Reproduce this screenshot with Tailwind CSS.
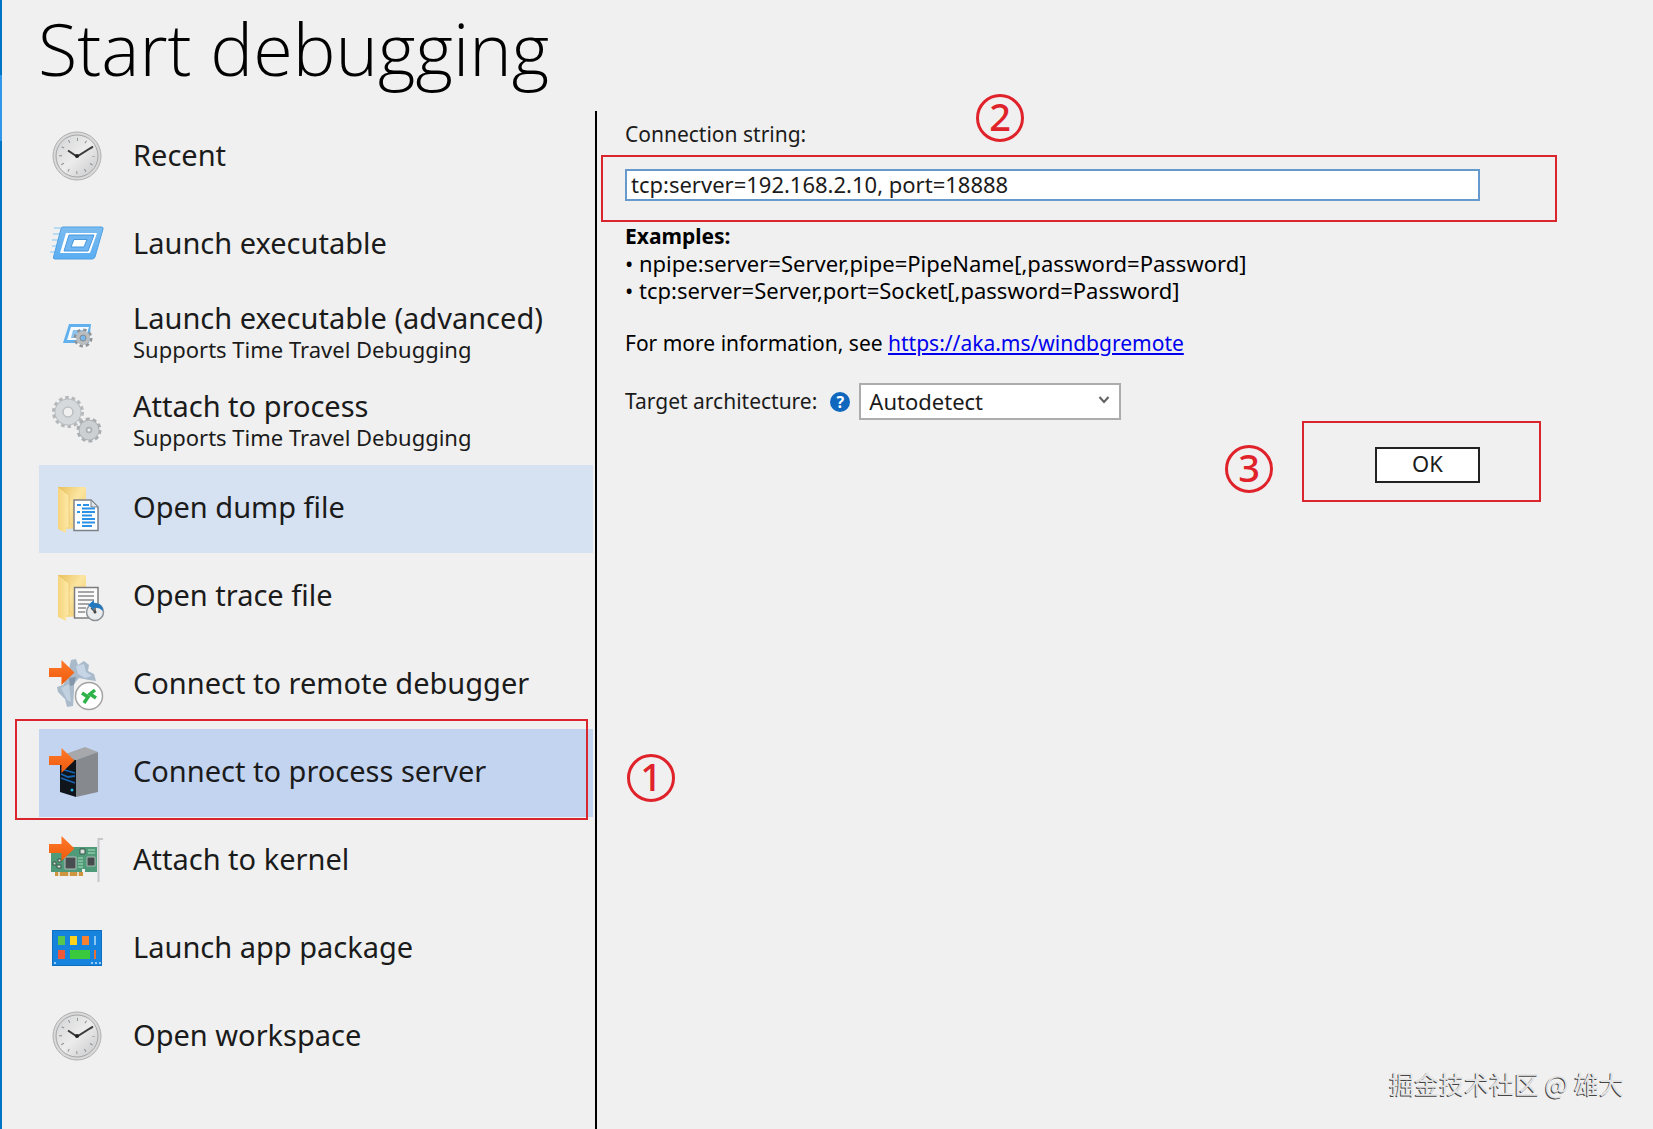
<!DOCTYPE html>
<html lang="en">
<head>
<meta charset="utf-8">
<title>Start debugging</title>
<script src="https://cdn.jsdelivr.net/npm/@tailwindcss/browser@4"></script>
</head>
<body class="relative flex min-h-screen bg-[#f0f0f0] font-['Noto_Sans','Noto_Sans_CJK_SC',sans-serif] text-[#1b1b1b]">

<svg class="absolute size-0" aria-hidden="true">
  <defs>
    <linearGradient id="face" x1="0" y1="0" x2="1" y2="1"><stop offset="0" stop-color="#d2d3d5"/><stop offset=".5" stop-color="#ececec"/><stop offset="1" stop-color="#c6c7c9"/></linearGradient>
    <linearGradient id="blue" x1="0" y1="0" x2="0" y2="1"><stop offset="0" stop-color="#7cbcf0"/><stop offset="1" stop-color="#5aadf2"/></linearGradient>
    <linearGradient id="gold" x1="0" y1="0" x2="1" y2="1"><stop offset="0" stop-color="#e9bf5c"/><stop offset=".45" stop-color="#fbe5a0"/><stop offset="1" stop-color="#f0c968"/></linearGradient>
    <linearGradient id="flap" x1="0" y1="0" x2="1" y2="0"><stop offset="0" stop-color="#f6d47c"/><stop offset="1" stop-color="#fdeaa8"/></linearGradient>
    <linearGradient id="orange" x1="0" y1="0" x2="0" y2="1"><stop offset="0" stop-color="#ff7a2a"/><stop offset="1" stop-color="#ee5a0c"/></linearGradient>
    <symbol id="clock" viewBox="0 0 56 56">
      <circle cx="28" cy="27" r="24" fill="#d9d9d9" stroke="#b0b0b0"/>
      <circle cx="28" cy="27" r="21" fill="url(#face)" stroke="#a6a6a6"/>
      <circle cx="28" cy="27" r="16.5" fill="none" stroke="#8f8f8f" stroke-width="3" stroke-dasharray="1 7.64" stroke-dashoffset=".5"/>
      <path d="M19 21.500 28 27.500 44 17.500" fill="none" stroke="#3a3a3a" stroke-width="2"/>
      <circle cx="28" cy="27" r="2" fill="#222"/>
    </symbol>
    <symbol id="arrow" viewBox="0 0 56 56">
      <path d="M0 11H12.500V3L25.500 15.500 12.500 28V20H0Z" fill="url(#orange)"/>
    </symbol>
    <symbol id="folder" viewBox="0 0 56 56">
      <path d="M9 6H36L37 7V47L17 48Z" fill="url(#gold)"/>
      <path d="M9 6 20 14V44L17 47V52L9 48Z" fill="url(#flap)"/>
      <path d="M9 6 20 14V44" fill="none" stroke="#e6bd5c" stroke-width=".6"/>
    </symbol>
  </defs>
</svg>

<div class="flex w-[2px] flex-col bg-[#0074c4]" aria-hidden="true"><div class="mt-[75px] h-[66px] bg-[#2f96ea]"></div></div>

<main class="flex flex-1 flex-col">
  <h1 class="h-[111px] pl-[36px] pt-[4px] font-['Open_Sans','Noto_Sans',sans-serif] text-[72px] leading-[88px] font-light text-black">Start debugging</h1>

  <div class="flex flex-1">
    <nav class="w-[593px] shrink-0 pt-[2px] pr-[2px] pl-[37px] text-[29px] leading-[32px]" aria-label="Start debugging">
      <a href="#recent" class="flex h-[88px] items-center gap-[28px] pl-[10px]">
        <svg class="size-14 shrink-0"><use href="#clock"/></svg>
        <span class="pb-1">Recent</span>
      </a>
      <a href="#launch" class="flex h-[88px] items-center gap-[28px] pl-[10px]">
        <svg class="size-14 shrink-0" viewBox="0 1 56 56">
          <path d="M5 12H14M4 18H12M3 24H11M3 30H9M1 36H8" stroke="#b9daf3" stroke-width="2"/>
          <path d="M14 11H52.500Q54.500 11 54 13L46 41Q45.300 43 43 43H6Q4 43 4.500 41L12 13Q12.500 11 14 11Z" fill="url(#blue)" stroke="#4d9fe2"/>
          <path d="M17 17H48L41 37H11Z" fill="#fff"/>
          <path d="M20 19H45L39 35H15Z" fill="#6fb6f2" stroke="#4798dd"/>
          <path d="M25 23.500H38L35 31H22Z" fill="#fff" stroke="#4798dd"/>
        </svg>
        <span class="pb-1">Launch executable</span>
      </a>
      <a href="#advanced" class="flex h-[88px] items-center gap-[28px] pl-[10px]">
        <svg class="size-14 shrink-0" viewBox="0 1 56 56">
          <path d="M20 20H42L40 39H14Z" fill="#62b1ef"/>
          <path d="M22 23H40L36 36H18Z" fill="#f5faff"/>
          <path d="M24 26H37L34 34H22Z" fill="#8cc4ef"/>
          <circle cx="34" cy="34" r="8" fill="none" stroke="#8f9498" stroke-width="3" stroke-dasharray="3.400 2.880"/>
          <circle cx="34" cy="34" r="5" fill="#72b1e2" stroke="#b9bdc0" stroke-width="4"/>
          <circle cx="34" cy="34" r="3" fill="#78b8ea" stroke="#858a8e"/>
        </svg>
        <span>Launch executable (advanced)<small class="block text-[22px] leading-[30px]">Supports Time Travel Debugging</small></span>
      </a>
      <a href="#attach" class="flex h-[88px] items-center gap-[28px] pl-[10px]">
        <svg class="size-14 shrink-0" viewBox="0 1 56 56">
          <g fill="none">
            <circle cx="19" cy="20" r="14" stroke="#b4b8ba" stroke-width="4" stroke-dasharray="3.500 2.784"/>
            <circle cx="19" cy="20" r="9" stroke="#b9bdbf" stroke-width="9"/>
            <circle cx="19" cy="20" r="9" stroke="#d6d9db" stroke-width="7"/>
            <circle cx="19" cy="20" r="5" stroke="#bcc0c2"/>
            <circle cx="40" cy="38" r="11" stroke="#a9adb0" stroke-width="3" stroke-dasharray="3.900 3"/>
            <circle cx="40" cy="38" r="6" stroke="#aeb2b5" stroke-width="9"/>
            <circle cx="40" cy="38" r="6" stroke="#cdd0d2" stroke-width="7"/>
            <circle cx="40" cy="38" r="3" stroke="#a9adb0"/>
          </g>
        </svg>
        <span>Attach to process<small class="block text-[22px] leading-[30px]">Supports Time Travel Debugging</small></span>
      </a>
      <a href="#dump" class="flex h-[88px] items-center gap-[28px] bg-[#d6e2f1] pl-[10px]">
        <svg class="size-14 shrink-0" viewBox="0 0 56 56">
          <use href="#folder"/>
          <path d="M25 19H42L49 26V49.500H25Z" fill="#fff" stroke="#7d8288" stroke-width="1.500"/>
          <path d="M42 19V26H49Z" fill="#dfe3e7" stroke="#7d8288"/>
          <path d="M28 24H32M34 24H40M33 27.500H46M28 31H31M33 31H46M33 34.500H43M33 38H46M28 41.500H31M33 41.500H46M33 45H43" stroke="#2b92e8" stroke-width="2"/>
        </svg>
        <span class="pb-1">Open dump file</span>
      </a>
      <a href="#trace" class="flex h-[88px] items-center gap-[28px] pl-[10px]">
        <svg class="size-14 shrink-0" viewBox="0 0 56 56">
          <use href="#folder"/>
          <path d="M25.500 18.500H49V49H25.500Z" fill="#fafafa" stroke="#7d7d7d" stroke-width="1.500"/>
          <path d="M29 23H45M29 27H45M29 31H45M29 35H40M29 39H37M29 43H36" stroke="#8a8a8a" stroke-width="1.300"/>
          <circle cx="46" cy="43" r="8.500" fill="#e9ecee" stroke="#8b9197" stroke-width="1.500"/>
          <path d="M46 43V37M46 43 42 39" stroke="#555" stroke-width="1.500"/>
          <path d="M39 36 45 31V34Q54 34 54 42Q50 38 45 39V41Z" fill="#2478bd"/>
          <circle cx="46" cy="43" r="1.500" fill="#444"/>
        </svg>
        <span class="pb-1">Open trace file</span>
      </a>
      <a href="#remote" class="flex h-[88px] items-center gap-[28px] pl-[10px]">
        <svg class="size-14 shrink-0" viewBox="0 0 56 56">
          <path d="M22 3 27 2 29 8 35 4 40 8 39 14 45 17 47 24 40 23 30 21 25 27 25 34 24 49 18 50 16 42 9 35 8 30 14 28 18 21Z" fill="#a9bacb"/>
          <path d="M27 9 35 7 37 15 43 19 36 21 29 17Z" fill="#c5d5e6"/>
          <path d="M12 31 20 27 22 45 18 43Z" fill="#c2d1e0"/>
          <path d="M20 21 27 20 25 28 21 29Z" fill="#8497aa"/>
          <use href="#arrow"/>
          <circle cx="40" cy="39" r="13.500" fill="#fff" stroke="#a3a3a3" stroke-width="1.500"/>
          <path d="M33 36 39 40 35 46" fill="none" stroke="#2db34a" stroke-width="3.500"/>
          <path d="M46 33 41 37 47 41" fill="none" stroke="#2db34a" stroke-width="3.500"/>
        </svg>
        <span class="pb-1">Connect to remote debugger</span>
      </a>
      <a href="#server" aria-current="page" class="relative flex h-[88px] items-center gap-[28px] bg-[#c3d4f1] pl-[10px]">
        <svg class="size-14 shrink-0" viewBox="0 0 56 56">
          <path d="M11 11 27 15V52L11 47Z" fill="#10151c"/>
          <path d="M11 11 36 2 49 7 27 15Z" fill="#a6a8ab"/>
          <path d="M27 15 49 7V47L27 52Z" fill="#86898d"/>
          <path d="M12 24 26 28M12 29 19 32 26 31M12 33 26 38" fill="none" stroke="#1764b0" stroke-width="1.800"/>
          <circle cx="23" cy="45" r="1.500" fill="#28b8e8"/>
          <use href="#arrow"/>
        </svg>
        <span class="pb-1">Connect to process server</span>
        <span class="pointer-events-none absolute -top-[10px] right-[5px] -bottom-[3px] -left-[24px] border-2 border-[#d9262e]"></span>
        <span class="absolute top-[25px] -right-[82px] flex size-12 items-center justify-center rounded-full border-[3px] border-[#e0222a] pb-1 text-[38px] leading-[38px] font-medium text-[#e0222a]">1</span>
      </a>
      <a href="#kernel" class="flex h-[88px] items-center gap-[28px] pl-[10px]">
        <svg class="size-14 shrink-0" viewBox="0 0 56 56">
          <path d="M2 14H48V39H36V36H33V39H2Z" fill="#4f9a78"/>
          <path d="M6 39H34V43H6Z" fill="#cf9440"/>
          <path d="M10 39V44M20 39V44M29 39V44" stroke="#f0f0f0" stroke-width="1.500"/>
          <path d="M16 24H27V36H16Z" fill="#484e50" stroke="#b5bfbd"/>
          <path d="M38 24H46V33H38Z" fill="#454b4d" stroke="#a9b8b2"/>
          <path d="M31 16H36V21H31ZM4 29H7V32H4ZM9 26H12V29H9ZM8 32H12V35H8Z" fill="#d8dedb" stroke="#375646"/>
          <path d="M29 25H34M29 28H34M29 31H34M29 34H34M39 17H46M39 20H46" stroke="#8fc8a7" stroke-width="1.300"/>
          <path d="M54 6H49.500V49" fill="none" stroke="#c5c7c9" stroke-width="2"/>
          <use href="#arrow"/>
        </svg>
        <span class="pb-1">Attach to kernel</span>
      </a>
      <a href="#package" class="flex h-[88px] items-center gap-[28px] pl-[10px]">
        <svg class="size-14 shrink-0" viewBox="0 1 56 56">
          <path d="M3 10H53V46H3Z" fill="#1683dc"/>
          <path d="M3.500 10.500H52.500V45.500H3.500Z" fill="none" stroke="#0e6fc2"/>
          <path d="M9 16H16V25H9Z" fill="#57c84d"/>
          <path d="M21 16H28V25H21Z" fill="#fbd21c"/>
          <path d="M33 16H40V25H33Z" fill="#f78130"/>
          <path d="M45 16H47V25H45Z" fill="#86c7f5"/>
          <path d="M9 30H16V39H9Z" fill="#f0583a"/>
          <path d="M21 30H41V39H21Z" fill="#3ac83c"/>
          <path d="M45 30H47V39H45Z" fill="#e5713a"/>
          <path d="M5 43H7M42 43H44M46 43H48M50 43H52" stroke="#bfe3ff" stroke-width="1.500"/>
        </svg>
        <span class="pb-1">Launch app package</span>
      </a>
      <a href="#workspace" class="flex h-[88px] items-center gap-[28px] pl-[10px]">
        <svg class="size-14 shrink-0"><use href="#clock"/></svg>
        <span class="pb-1">Open workspace</span>
      </a>
    </nav>

    <section class="flex-1 border-l-2 border-black pt-[10px] pr-[173px] pl-[28px] text-[21px] leading-[27px]">
      <div class="relative">
        <label for="conn" class="block">Connection string:</label>
        <span class="absolute -top-[27px] left-[351px] flex size-12 items-center justify-center rounded-full border-[3px] border-[#e0222a] pb-1 text-[38px] leading-[38px] font-medium text-[#e0222a]">2</span>
      </div>
      <div class="relative mt-[21px]">
        <input id="conn" type="text" value="tcp:server=192.168.2.10, port=18888" class="block h-8 w-full border-2 border-[#6699cc] bg-white px-1 pb-[3px] text-[22px] outline-none">
        <span class="pointer-events-none absolute -top-[14px] -right-[77px] -bottom-[21px] -left-[24px] border-2 border-[#d9262e]"></span>
      </div>
      <div class="mt-[22px] text-black">
        <p class="font-bold">Examples:</p>
        <p class="text-[22px]">• npipe:server=Server,pipe=PipeName[,password=Password]</p>
        <p class="text-[22px]">• tcp:server=Server,port=Socket[,password=Password]</p>
        <p class="mt-[26px]">For more information, see <a href="https://aka.ms/windbgremote" class="text-[#0000ee] underline">https://aka.ms/windbgremote</a></p>
      </div>
      <div class="mt-[26px] flex items-center">
        <label for="arch">Target architecture:</label>
        <button type="button" aria-label="Help" class="ml-[13px] flex size-5 items-center justify-center rounded-full bg-[#0f68bd] text-[16px] leading-[20px] font-bold text-white">?</button>
        <div class="relative ml-[9px]">
          <select id="arch" class="block h-[37px] w-[262px] appearance-none border-2 border-[#acacac] bg-white px-2 text-[22px]"><option>Autodetect</option></select>
          <svg class="pointer-events-none absolute top-[13px] right-[11px] h-2 w-3" viewBox="0 0 12 8"><path d="M1.500 1 6 6 10.500 1" fill="none" stroke="#606060" stroke-width="2"/></svg>
        </div>
      </div>
      <div class="mt-[27px] flex justify-end">
        <div class="relative">
          <button type="button" class="block h-9 w-[105px] border-2 border-[#222] bg-white pb-[3px] text-[22px] leading-[29px]">OK</button>
          <span class="pointer-events-none absolute -top-[26px] -right-[61px] -bottom-[19px] -left-[73px] border-2 border-[#d9262e]"></span>
          <span class="absolute -top-[2px] -left-[150px] flex size-12 items-center justify-center rounded-full border-[3px] border-[#e0222a] pb-1 text-[38px] leading-[38px] font-medium text-[#e0222a]">3</span>
        </div>
      </div>
    </section>
  </div>
</main>

<div class="absolute right-[29px] bottom-[29px] font-['Noto_Sans_CJK_SC',sans-serif] text-[25px] leading-[34px] text-[#e4e4e4] [text-shadow:-1px_1px_0_#444]">掘金技术社区 @ 雄大</div>
</body>
</html>
